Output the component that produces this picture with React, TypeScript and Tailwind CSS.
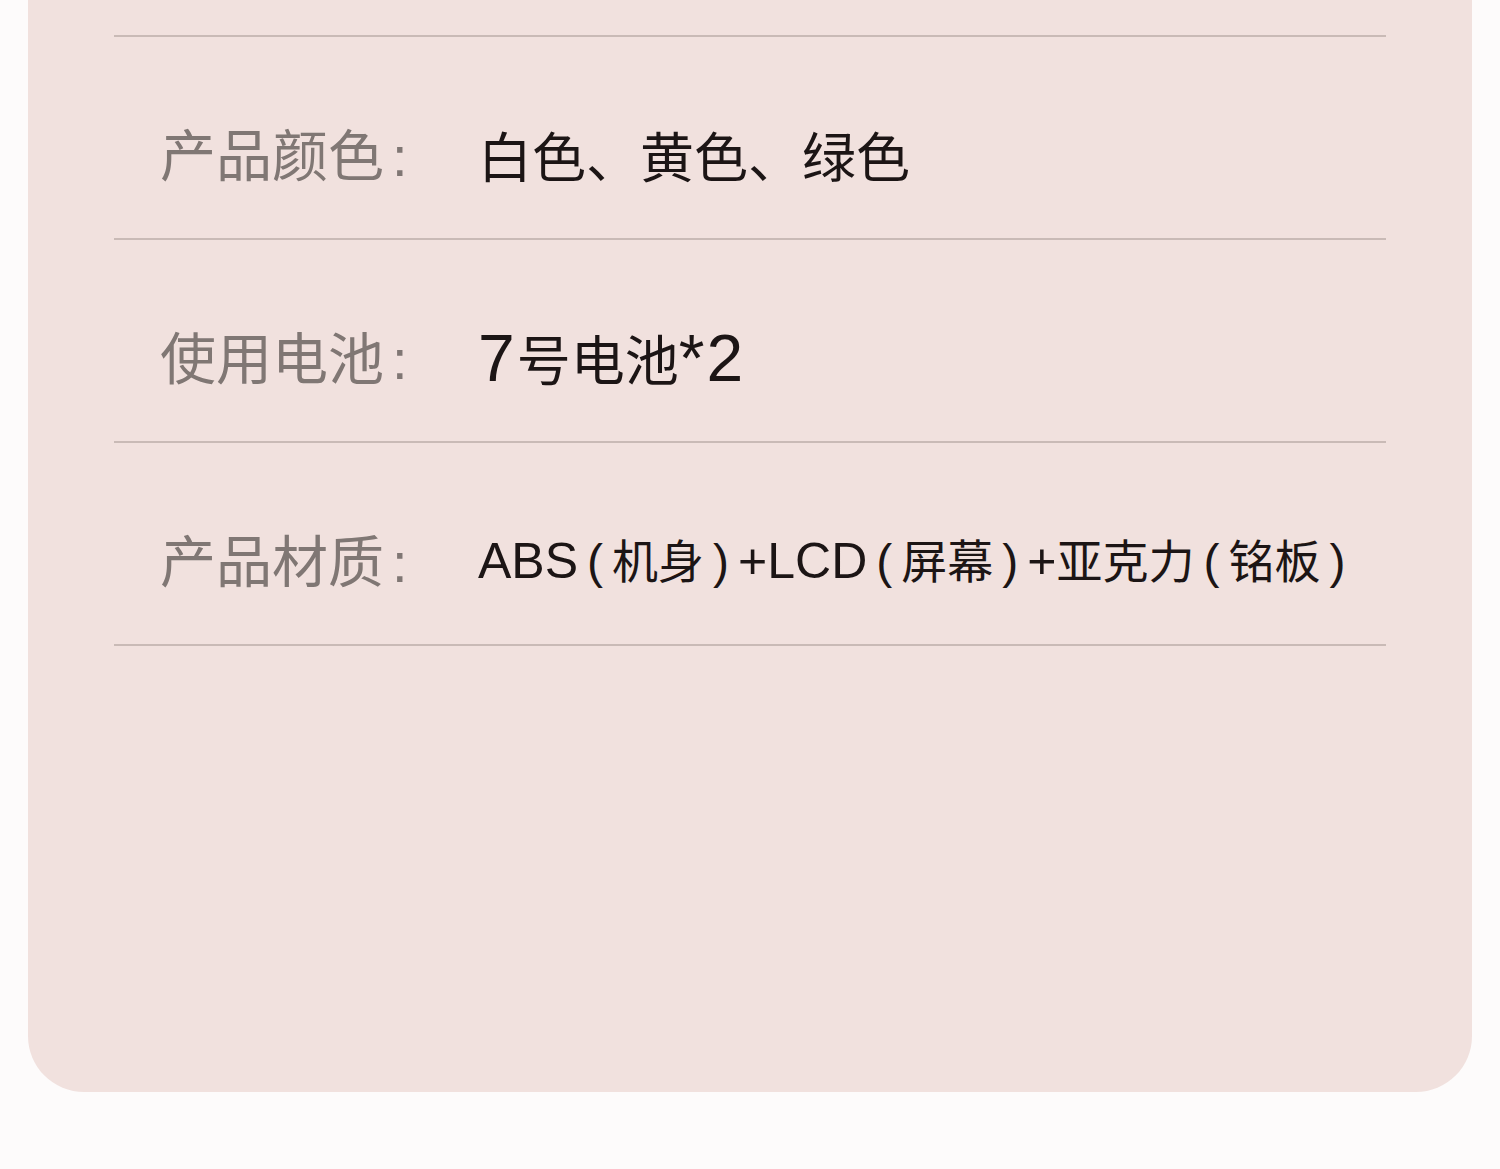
import React from "react";

function L({ children, big }: { children: React.ReactNode; big?: boolean }) {
  return (
    <span
      className={
        big
          ? "font-['Liberation_Sans',sans-serif] text-[66px] tracking-[2px]"
          : "font-['Liberation_Sans',sans-serif] text-[50px]"
      }
    >
      {children}
    </span>
  );
}
function P({ children }: { children: React.ReactNode }) {
  return <span className="font-['Liberation_Sans',sans-serif] text-[48px] mx-[9px]">{children}</span>;
}

const rows: { label: string; value: React.ReactNode; size: "lg" | "sm" }[] = [
  { label: "产品颜色", value: <>白色、黄色、绿色</>, size: "lg" },
  {
    label: "使用电池",
    value: (
      <>
        <L big>7</L>
        <span>号电池</span>
        <L big>*2</L>
      </>
    ),
    size: "lg",
  },
  {
    label: "产品材质",
    value: (
      <>
        <L>ABS</L>
        <P>(</P>机身<P>)</P>
        <L>+LCD</L>
        <P>(</P>屏幕<P>)</P>
        <L>+</L>亚克力<P>(</P>铭板<P>)</P>
      </>
    ),
    size: "sm",
  },
];

export default function App() {
  return (
    <div className="w-[1500px] h-[1169px] bg-[#fdfbfb] px-[28px] overflow-hidden font-['Noto_Sans_CJK_SC',sans-serif]">
      <div className="h-[1092px] bg-[#f1e1de] rounded-b-[56px] px-[86px] pt-[35px]">
        {rows.map((r) => (
          <div
            key={r.label}
            className="border-t-2 border-[#c9bab6] h-[203px] flex items-center pt-[34px] pl-[46px]"
          >
            <div className="w-[318px] shrink-0 flex items-baseline text-[56px] leading-none text-[#807774]">
              <span>{r.label}</span>
              <span className="ml-[8px] font-['Liberation_Sans',sans-serif]">:</span>
            </div>
            <div
              className={
                r.size === "lg"
                  ? "text-[54px] leading-none text-[#1c1515] whitespace-nowrap"
                  : "text-[46px] leading-none text-[#1c1515] whitespace-nowrap"
              }
            >
              {r.value}
            </div>
          </div>
        ))}
        <div className="border-t-2 border-[#c9bab6]" />
      </div>
    </div>
  );
}
